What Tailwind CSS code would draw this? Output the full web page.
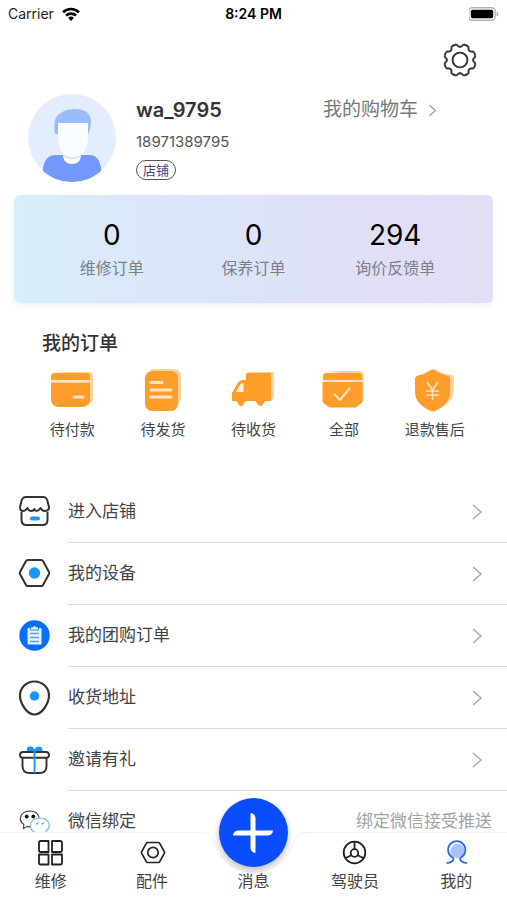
<!DOCTYPE html>
<html lang="zh-CN">
<head>
<meta charset="utf-8">
<meta name="viewport" content="width=device-width, initial-scale=1">
<title>我的</title>
<script src="https://cdn.jsdelivr.net/npm/@tailwindcss/browser@4"></script>
</head>
<body class="h-screen overflow-hidden bg-white font-['Inter','Noto_Sans_CJK_SC',sans-serif] text-[#3c3e42]">
<svg class="hidden" aria-hidden="true">
  <symbol id="chevron" viewBox="0 0 12 18"><path d="M2 2l8 7-8 7" fill="none" stroke="currentColor" stroke-width="1.5"/></symbol>
</svg>
<div class="relative flex h-full flex-col overflow-hidden">

  <!-- Status bar -->
  <div class="grid h-7 grid-cols-3 items-center px-2 text-sm leading-5 text-black">
    <div class="flex items-center gap-2 text-[#222]">Carrier
      <svg class="h-[14px] w-[18px]" viewBox="0 0 18 14" fill="none" stroke="#000" stroke-width="2.6"><path d="M1 5.3a11.5 11.5 0 0 1 16 0"/><path d="M4 8.6a7.2 7.2 0 0 1 10 0"/><path d="M9 14l-2.9-3a4.2 4.2 0 0 1 5.8 0z" fill="#000" stroke="none"/></svg>
    </div>
    <div class="text-center font-semibold">8:24 PM</div>
    <svg class="h-[14px] w-[30px] justify-self-end" viewBox="1 0 30 14"><rect x=".8" y=".8" width="26.4" height="12.4" rx="3.6" fill="#fff" stroke="#b5b5b5" stroke-width="1.4"/><rect x="2.8" y="2.8" width="22.4" height="8.4" rx="1.6"/><path d="M28.6 4.6q2 .6 2 2.4t-2 2.4z" fill="#b5b5b5"/></svg>
  </div>

  <!-- Settings -->
  <div class="flex justify-end pr-[29px] pt-[14px]">
    <button type="button" aria-label="设置" class="text-[#333]">
      <svg class="size-9" viewBox="-18 -18 36 36" fill="none" stroke="currentColor" stroke-width="1.9" stroke-linecap="round">
        <defs><path id="tooth" d="M-5.05-12.2C-3.2-13-3.5-13.6-3.2-14.6C-3-15.4-2.4-15.8-1.4-15.9Q0-16.1 1.4-15.9C2.4-15.8 3-15.4 3.2-14.6C3.5-13.6 3.2-13 5.05-12.2"/></defs>
        <g transform="rotate(22.5)"><use href="#tooth"/><use href="#tooth" transform="rotate(45)"/><use href="#tooth" transform="rotate(90)"/><use href="#tooth" transform="rotate(135)"/><use href="#tooth" transform="rotate(180)"/><use href="#tooth" transform="rotate(225)"/><use href="#tooth" transform="rotate(270)"/><use href="#tooth" transform="rotate(315)"/></g>
        <circle r="7.4"/>
      </svg>
    </button>
  </div>

  <!-- Profile -->
  <section class="flex items-start gap-5 pb-[13px] pl-7 pr-[70px] pt-4">
    <svg class="size-[88px] shrink-0" viewBox="0 0 88 88" role="img" aria-label="头像">
      <clipPath id="disc"><circle cx="44" cy="44" r="44"/></clipPath>
      <g clip-path="url(#disc)">
        <rect width="88" height="88" fill="#e4edfe"/>
        <path d="M15 88V74Q17 61 28 61h33q10 0 12 13v14z" fill="#7398fd"/>
        <path d="M35 56h18v6q-1 8-9 8t-9-8z" fill="#fafcff"/>
        <path d="M35 60q9 6 18 0v2q-4 4-10 3-6 0-8-4z" fill="#dfe6ee"/>
        <path d="M27 40q-3-17 6-21 5-4 13-4 17 0 17 13 0 7-3 12z" fill="#99bdfc"/>
        <path d="M30 29h30v15q-1 19-15 19T30 44z" fill="#fafdff"/>
      </g>
    </svg>
    <div class="flex flex-1 flex-col items-start">
      <div class="flex w-full items-center justify-between">
        <h1 class="text-xl font-semibold leading-8 text-[#333]">wa_9795</h1>
        <a href="#" class="flex items-center gap-2.5 text-[19px] leading-8 text-[#777]">我的购物车
          <svg class="h-[15px] w-[9px] text-[#999]"><use href="#chevron"/></svg></a>
      </div>
      <p class="text-[15px] leading-8 text-[#555]">18971389795</p>
      <span class="mt-[2px] flex h-5 items-center rounded-full border-[1.5px] border-[#555] px-[6px] text-[13px] leading-none text-[#4a3f80]">店铺</span>
    </div>
  </section>

  <!-- Statistics -->
  <section class="mx-[14px] grid h-[108px] shrink-0 grid-cols-3 rounded-md bg-linear-to-r from-[#d8eefa] via-[#dde3f8] to-[#e4ddf4] px-[27px] pt-[22px] text-center shadow-[0_2px_6px_rgba(0,0,0,0.07)]">
    <a href="#" class="block"><strong class="block text-[28px] font-normal leading-9 text-black">0</strong><span class="block text-base leading-[30px] text-[#7b7f88]">维修订单</span></a>
    <a href="#" class="block"><strong class="block text-[28px] font-normal leading-9 text-black">0</strong><span class="block text-base leading-[30px] text-[#7b7f88]">保养订单</span></a>
    <a href="#" class="block"><strong class="block text-[28px] font-normal leading-9 text-black">294</strong><span class="block text-base leading-[30px] text-[#7b7f88]">询价反馈单</span></a>
  </section>

  <!-- Orders -->
  <section class="shrink-0 pb-[37px] pt-[25px]">
    <h2 class="pl-[42px] text-[19px] font-medium leading-8 text-[#333]">我的订单</h2>
    <nav class="mt-2 grid grid-cols-5 px-[27px] text-[15px] leading-7 text-[#444]">
      <a href="#" class="flex flex-col items-center gap-1">
        <svg class="size-[44px]" viewBox="0 0 44 44"><path d="M6 4h33q4 0 4 4v25l-5 4V8z" fill="#ffd3a0"/><path d="M1 8q0-3 4-3h31q4 0 4 3v4H1z" fill="#ff9d2b"/><path d="M1 14.500h39V32q-1 7-8 7H9q-7 0-8-7z" fill="#ff9d2b"/><path d="M1 13h39" stroke="#ffe8cc" stroke-width="2"/><path d="M24 29h9" stroke="#ffe3c2" stroke-width="3" stroke-linecap="round"/></svg>
        待付款</a>
      <a href="#" class="flex flex-col items-center gap-1">
        <svg class="size-[44px]" viewBox="0 0 44 44"><path d="M9 1h23q8 0 8 8v20q0 7-6 8z" fill="#ffd3a0"/><rect x="4" y="3" width="33" height="40" rx="7" fill="#ff9d2b"/><path d="M10 14.500h11M10 22h20M10 29h20" stroke="#ffe3c2" stroke-width="3" stroke-linecap="round"/></svg>
        待发货</a>
      <a href="#" class="flex flex-col items-center gap-1">
        <svg class="size-[44px]" viewBox="0 0 44 44"><path d="M17 4h26v26l-3 3z" fill="#ffd3a0"/><path d="M15 6q0-1 1-1h24v28h-5q-1.500 0-2.500 2.500Q31 38 29.500 38T26 35.500Q25 33 24 33H15q-1 0-2 2.500Q12 38 10 38T7 35.500Q6 33 5 33H1V25l5-9q2-4 7-4h2z" fill="#ff9d2b"/><path d="M5 24l4-7q1-2 3.500-2v9z" fill="#fff4e6"/></svg>
        待收货</a>
      <a href="#" class="flex flex-col items-center gap-1">
        <svg class="size-[44px]" viewBox="0 0 44 44"><path d="M6 3h32q4 0 4 4v25l-5 4V8z" fill="#ffd3a0"/><path d="M1 8q0-3 4-3h31q4 0 4 3v4H1z" fill="#ff9d2b"/><path d="M1 14.500h39V34l-6 5H7l-6-5z" fill="#ff9d2b" stroke="#ff9d2b" stroke-linejoin="round"/><path d="M0 13h41" stroke="#ffe8cc" stroke-width="2"/><path d="M12 26l6 6 10-12" fill="none" stroke="#ffe3c2" stroke-width="2"/></svg>
        全部</a>
      <a href="#" class="flex flex-col items-center gap-1">
        <svg class="size-[44px]" viewBox="0 0 44 44"><path d="M20 1q3 0 5 2 7 3 14 4 2 0 2 3v12q0 10-13 18z" fill="#ffd3a0"/><path d="M18 2q1-1 3 0 6 4 14 6 2 1 2 3v13q0 12-15 19-2 1-4 0Q2 36 2 24V11q0-2 2-3 8-2 14-6z" fill="#ff9d2b"/><path d="M14 14l5.500 8 5.500-8M19.500 22v10M13 23h13M13 27h13" fill="none" stroke="#ffe3c2" stroke-width="1.600"/></svg>
        退款售后</a>
    </nav>
  </section>

  <!-- Menu -->
  <nav class="shrink-0 text-[17px] text-[#3f4347]">
    <a href="#" class="flex items-center pl-[18px]">
      <svg class="size-8 shrink-0" viewBox="0 0 32 32" fill="none" stroke="#333" stroke-width="2" stroke-linejoin="round"><path d="M3.500 16v8q0 5 5 5h16q5 0 5-5v-8"/><path d="M8 1h17q3.500 0 4.500 4l1.500 6q0 4-4 4-3 0-4.500-3-2 3-4 3-1.500 0-2-2-1 2-3 2-3 0-4-3-2 3-4.500 3-3 0-3-4l1.500-6q1-4 4.500-4z"/><path d="M14 22.500h6" stroke="#1a95fb" stroke-width="4" stroke-linecap="round"/></svg>
      <span class="ml-[18px] flex h-[62px] flex-1 items-center justify-between border-b border-[#ddd] pr-6">进入店铺<svg class="h-[18px] w-3 text-[#aaa]"><use href="#chevron"/></svg></span>
    </a>
    <a href="#" class="flex items-center pl-[18px]">
      <svg class="size-8 shrink-0" viewBox="0 0 32 32" fill="none" stroke="#333" stroke-width="2" stroke-linejoin="round"><path d="M9.500 2h14q1 0 1.500 1l6 11q.5 1 0 2l-6 11q-.5 1-1.500 1h-14q-1 0-1.500-1L2 16q-.5-1 0-2L8 3Q8.500 2 9.500 2z"/><circle cx="16.500" cy="15" r="5.700" fill="#1a95f0" stroke="none"/></svg>
      <span class="ml-[18px] flex h-[62px] flex-1 items-center justify-between border-b border-[#ddd] pr-6">我的设备<svg class="h-[18px] w-3 text-[#aaa]"><use href="#chevron"/></svg></span>
    </a>
    <a href="#" class="flex items-center pl-[18px]">
      <svg class="size-8 shrink-0" viewBox="0 0 32 32"><circle cx="16.500" cy="15.500" r="15.200" fill="#0770fb"/><path d="M10.500 8h12q1 0 1 1v14.500q0 1-1 1h-12q-1 0-1-1V9q0-1 1-1z" fill="#e8f2ff"/><path d="M12.500 10V7h2q2-2.500 4 0h2v3z" fill="#e8f2ff" stroke="#0770fb" stroke-width=".8"/><path d="M12 13.500h9M12 17.500h9M12 21.500h9" stroke="#5b9ffc" stroke-width="1.300"/></svg>
      <span class="ml-[18px] flex h-[62px] flex-1 items-center justify-between border-b border-[#ddd] pr-6">我的团购订单<svg class="h-[18px] w-3 text-[#aaa]"><use href="#chevron"/></svg></span>
    </a>
    <a href="#" class="flex items-center pl-[18px]">
      <svg class="h-9 w-8 shrink-0" viewBox="0 0 32 36" fill="none" stroke="#333" stroke-width="2.200"><path d="M16.500 1.500C25 1.500 31 8 31 15.500c0 8-7 19-14.500 19S2 23.500 2 15.500C2 8 8 1.500 16.500 1.500z"/><circle cx="16.500" cy="16" r="4.700" fill="#1a95fb" stroke="none"/></svg>
      <span class="ml-[18px] flex h-[62px] flex-1 items-center justify-between border-b border-[#ddd] pr-6">收货地址<svg class="h-[18px] w-3 text-[#aaa]"><use href="#chevron"/></svg></span>
    </a>
    <a href="#" class="flex items-center pl-[18px]">
      <svg class="size-8 shrink-0" viewBox="0 0 32 32" fill="none" stroke="#333" stroke-width="1.900"><path d="M9 7.500Q8 2.500 12 2.500q3 0 4.500 3 1.500-3 4.500-3 4 0 3.500 5z" fill="#1a95fb" stroke="none"/><path d="M4.500 14v8q0 7 7 7h10q7 0 7-7v-8"/><rect x="2" y="8" width="29" height="5.800" rx="2.900"/><path d="M16.500 7v22" stroke="#1a95fb"/></svg>
      <span class="ml-[18px] flex h-[62px] flex-1 items-center justify-between border-b border-[#ddd] pr-6">邀请有礼<svg class="h-[18px] w-3 text-[#aaa]"><use href="#chevron"/></svg></span>
    </a>
    <a href="#" class="flex items-center pl-[18px]">
      <svg class="size-8 shrink-0" viewBox="0 0 32 32" fill="#fff" stroke-width="1.200"><path d="M5.500 22.500l.3-4C0 14.500 1.500 5.500 11.500 5c7 0 10 4 9.800 9 0 6-6 8-11.800 6.300z" stroke="#444"/><circle cx="8.700" cy="10.500" r="1.900" fill="#111"/><circle cx="15.300" cy="10.500" r="1.900" fill="#111"/><path d="M28 28.500l-3.300-1.700C17 28.500 12.500 25 12.500 19.500c0-4.500 4-7.500 9.500-7.500s9.300 3.500 9.300 7.300c0 3-1.500 4.500-3.300 5.700z" stroke="#77b8ee"/><circle cx="19.300" cy="17.500" r="1.100" fill="#3d9ae8"/><circle cx="24.700" cy="17.500" r="1.100" fill="#3d9ae8"/></svg>
      <span class="ml-[18px] flex h-[62px] flex-1 items-center justify-between pr-[15px]">微信绑定<span class="text-[#a3a3a3]">绑定微信接受推送</span></span>
    </a>
  </nav>

  <!-- Tab bar -->
  <nav class="absolute inset-x-0 bottom-0 h-[68px] text-base leading-6 text-[#444]">
    <div class="absolute inset-0 flex" aria-hidden="true">
      <div class="flex-1 border-t border-[#f2f2f2] bg-white"></div>
      <svg class="h-[68px] w-[110px]" viewBox="0 0 110 68"><path d="M0 .5C11 .5 13 4 16 12 22 28 38 40 55 40s33-12 39-28C97 4 99 .5 110 .5V68H0z" fill="#fff"/><path d="M0 .5C11 .5 13 4 16 12 22 28 38 40 55 40s33-12 39-28C97 4 99 .5 110 .5" fill="none" stroke="#f0f0f0"/></svg>
      <div class="flex-1 border-t border-[#f2f2f2] bg-white"></div>
    </div>
    <div class="relative grid h-full grid-cols-5 items-end pb-[7px]">
      <a href="#" class="flex flex-col items-center gap-[3px]">
        <svg class="size-[27px]" viewBox="0 0 27 27" fill="none" stroke="#222" stroke-width="1.800"><path d="M2 3.500q0-1.500 1.500-1.500h8v11h-8Q2 13 2 11.500zM15 2h8q2 0 2 2v7.500q0 1.500-1.500 1.500H15zM2 15.500h9.500v10h-8Q2 25.500 2 24zM15 15.500h10V24q0 1.500-1.500 1.500H15z" stroke-linejoin="round"/></svg>维修</a>
      <a href="#" class="flex flex-col items-center gap-[3px]">
        <svg class="size-[27px]" viewBox="0 0 27 27" fill="none" stroke="#222" stroke-width="1.700" stroke-linejoin="round"><path d="M8.500 3.500h11q.8 0 1.200.8l4.600 8.400q.4.800 0 1.600l-4.600 8.400q-.4.800-1.200.8h-11q-.8 0-1.200-.8l-4.600-8.400q-.4-.8 0-1.600l4.600-8.400q.4-.8 1.200-.8z"/><circle cx="14" cy="13.500" r="5.200"/></svg>配件</a>
      <a href="#" class="flex flex-col items-center">
        <span class="absolute -top-[34px] flex size-[69px] items-center justify-center rounded-full bg-[#0a4dff] shadow-[0_3px_6px_rgba(0,0,0,0.28)]">
          <svg class="size-10" viewBox="0 0 40 40" fill="#fff"><path d="M17.500 0q4.500.5 5 5v12.500H40q-.5 4.500-5 5H22.500V40q-4.500-.5-5-5V22.500H0q.5-4.500 5-5h12.500z"/></svg>
        </span>消息</a>
      <a href="#" class="flex flex-col items-center gap-[3px]">
        <svg class="size-[27px]" viewBox="0 0 27 27" fill="none" stroke="#222" stroke-width="1.800"><circle cx="13.500" cy="13.500" r="10.800"/><circle cx="13.500" cy="14" r="3.800"/><path d="M13.500 3v7M10.300 16.200l-6 3M16.700 16.200l6 3"/></svg>驾驶员</a>
      <a href="#" aria-current="page" class="flex flex-col items-center gap-[3px]">
        <svg class="size-[27px]" viewBox="0 0 27 27" fill="none" stroke="#2e66f0" stroke-width="1.700" stroke-linecap="round"><circle cx="14.500" cy="12" r="7.200" fill="#a9c0ff" stroke="none"/><path d="M4 24q5-.5 6.500-3.500Q11 19.500 9.500 18.500A8.700 8.700 0 1 1 18 18.500q-1.500 1-1 2 1.500 3 6.500 3.500"/></svg>我的</a>
    </div>
  </nav>
</div>
</body>
</html>
